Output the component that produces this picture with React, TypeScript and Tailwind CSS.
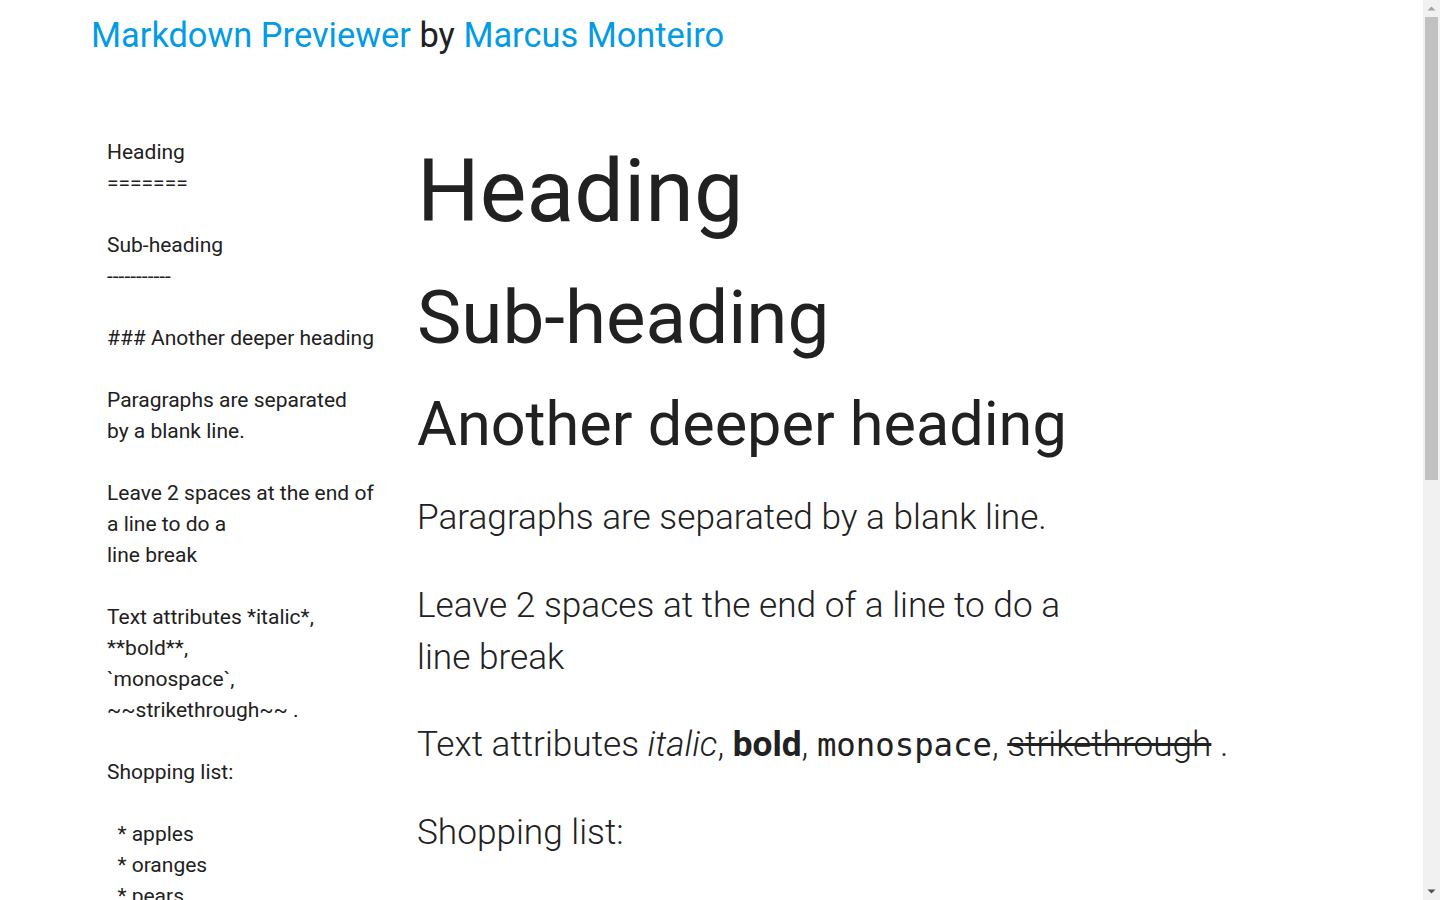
import React from "react";

const source = `Heading
=======

Sub-heading
-----------

### Another deeper heading

Paragraphs are separated
by a blank line.

Leave 2 spaces at the end of a line to do a
line break

Text attributes *italic*,
**bold**,
\`monospace\`,
~~strikethrough~~ .

Shopping list:

  * apples
  * oranges
  * pears

Numbered list:

  1. apples
  2. oranges
  3. pears

The rainbow colors are [jeremy](https://jeremy.com)

*[Herman Fassett](https://freecodecamp.com/hermanfassett)*`;

function FakeScrollbar() {
  return (
    <div className="fixed right-0 top-0 flex h-screen w-[17px] flex-col bg-[#f1f1f1]">
      <div className="flex h-[17px] items-center justify-center">
        <svg width="9" height="5" viewBox="0 0 9 5">
          <path d="M0.5 4.5 L4.5 0.5 L8.5 4.5 Z" fill="#a3a3a3" />
        </svg>
      </div>
      <div className="mx-[2px] h-[463px] bg-[#c1c1c1]" />
      <div className="flex-1" />
      <div className="flex h-[17px] items-center justify-center">
        <svg width="9" height="5" viewBox="0 0 9 5">
          <path d="M0.5 0.5 L4.5 4.5 L8.5 0.5 Z" fill="#505050" />
        </svg>
      </div>
    </div>
  );
}

export default function App() {
  return (
    <div className="min-h-[1683px] bg-white font-['Roboto',sans-serif] text-[#212121]">
      <header className="pl-[91px] pt-[15px]">
        <h1 className="text-[34.4px] leading-[40px] font-normal">
          <a className="text-[#039be5]">Markdown Previewer</a>{" "}
          <span>by</span>{" "}
          <a className="text-[#039be5]">Marcus Monteiro</a>
        </h1>
      </header>
      <main className="flex items-start pl-[107px] pt-[82px] pb-[80px]">
        <div className="w-[270px] shrink-0 whitespace-pre-wrap break-words text-[21px] leading-[31px]">
          {source}
        </div>
        <div className="ml-[40px] flex-1 pr-[120px]">
          <h1 className="mt-[5px] text-[88px] leading-[97px] font-normal">Heading</h1>
          <h2 className="mt-[38px] text-[74.6px] leading-[82px] font-normal">Sub-heading</h2>
          <h3 className="mt-[32px] text-[61.2px] leading-[67px] font-normal">Another deeper heading</h3>
          <div className="mt-[33px] max-w-[680px] text-[35.2px] leading-[52px] font-light">
            <p>Paragraphs are separated by a blank line.</p>
            <p className="mt-[36px]">
              Leave 2 spaces at the end of a line to do a
              <br />
              line break
            </p>
            <p className="mt-[35px] whitespace-nowrap">
              Text attributes <em className="italic">italic</em>, <strong className="font-bold">bold</strong>,{" "}
              <code className="font-['DejaVu_Sans_Mono',monospace] text-[32.3px] leading-none">monospace</code>,{" "}
              <del className="line-through">strikethrough</del> .
            </p>
            <p className="mt-[36px]">Shopping list:</p>
            <ul className="mt-[36px] list-disc pl-[40px]">
              <li>apples</li>
              <li>oranges</li>
              <li>pears</li>
            </ul>
            <p className="mt-[36px]">Numbered list:</p>
            <ol className="mt-[36px] list-decimal pl-[40px]">
              <li>apples</li>
              <li>oranges</li>
              <li>pears</li>
            </ol>
            <p className="mt-[36px]">
              The rainbow colors are <a className="text-[#039be5]">jeremy</a>
            </p>
            <p className="mt-[36px]">
              <em className="italic">
                <a className="text-[#039be5]">Herman Fassett</a>
              </em>
            </p>
          </div>
        </div>
      </main>
      <FakeScrollbar />
    </div>
  );
}
